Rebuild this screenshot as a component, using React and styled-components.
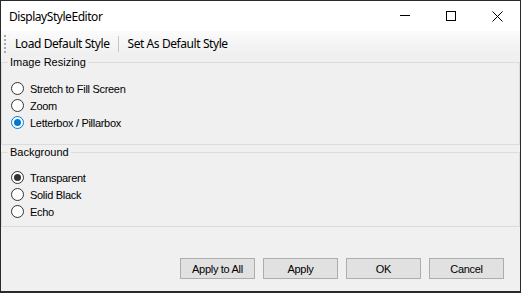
import React, { useState } from "react";
import styled, { createGlobalStyle } from "styled-components";

const GlobalStyle = createGlobalStyle`
  html, body {
    margin: 0;
    padding: 0;
    background: #2a2a2c;
  }
  #root {
    padding: 1px 0 0 1px;
  }
`;

// Fenêtre principale
const Window = styled.div`
  width: 519px;
  height: 290px;
  display: flex;
  flex-direction: column;
  background: #f0f0f0;
  font-family: "Liberation Sans", Arial, sans-serif;
  font-size: 11px;
  color: #000;
`;

const TitleBar = styled.div`
  height: 30px;
  display: flex;
  align-items: center;
  background: #fff;
  flex-shrink: 0;
`;

const Title = styled.span`
  flex: 1;
  padding-left: 8px;
  font-family: "Noto Sans", "Open Sans", sans-serif;
  font-size: 12px;
  letter-spacing: -0.45px;
`;

const CaptionButton = styled.div`
  width: 46px;
  height: 30px;
  display: flex;
  align-items: center;
  justify-content: center;
`;

const ToolStrip = styled.div`
  height: 25px;
  display: flex;
  align-items: center;
  background: linear-gradient(to bottom, #fbfbfb, #efefef);
  font-family: "Noto Sans", "Open Sans", sans-serif;
  font-size: 12px;
  letter-spacing: -0.42px;
  flex-shrink: 0;
`;

const Grip = styled.span`
  width: 2px;
  height: 18px;
  margin-left: 3px;
  background: repeating-linear-gradient(
    to bottom,
    #a8a8a8 0 2px,
    transparent 2px 4px
  );
`;

const ToolItem = styled.span`
  padding: 0 ${({ $right }) => $right || 8}px 0 ${({ $left }) => $left || 8}px;
  line-height: 22px;
`;

const ToolSeparator = styled.span`
  width: 1px;
  height: 16px;
  background: #c5c5c5;
`;

const GroupBox = styled.div`
  margin-top: ${({ $top }) => $top}px;
  height: ${({ $height }) => $height}px;
  border: 1px solid #dcdcdc;
  box-sizing: border-box;
  flex-shrink: 0;
`;

const GroupCaption = styled.span`
  display: block;
  width: fit-content;
  margin: -7px 0 0 6px;
  padding: 0 2px;
  line-height: 13px;
  background: #f0f0f0;
`;

const RadioList = styled.div`
  display: flex;
  flex-direction: column;
  margin-top: ${({ $gap }) => $gap}px;
  padding-left: 9px;
`;

const RadioRow = styled.label`
  height: 17px;
  display: flex;
  align-items: center;
  gap: 6px;
  cursor: default;
`;

const RadioCircle = styled.span`
  width: 13px;
  height: 13px;
  box-sizing: border-box;
  border-radius: 50%;
  border: 1px solid ${({ $checked, $accent }) => ($checked && $accent ? "#0078d7" : "#333")};
  background: #fff;
  display: flex;
  align-items: center;
  justify-content: center;

  &::after {
    content: "";
    width: 7px;
    height: 7px;
    border-radius: 50%;
    background: ${({ $accent }) => ($accent ? "#0078d7" : "#333")};
    display: ${({ $checked }) => ($checked ? "block" : "none")};
  }
`;

const RadioLabel = styled.span`
  letter-spacing: -0.3px;
`;

const Footer = styled.div`
  margin-top: auto;
  display: flex;
  justify-content: flex-end;
  gap: 8px;
  padding: 0 16px 12px 0;
`;

const Button = styled.button`
  width: 75px;
  height: 21px;
  box-sizing: border-box;
  padding: 0;
  border: 1px solid #adadad;
  background: #e1e1e1;
  font-family: "Liberation Sans", Arial, sans-serif;
  font-size: 11px;
  letter-spacing: -0.3px;
  color: #000;
`;

const RadioGroup = ({ options, value, onChange, accent, gap }) => (
  <RadioList $gap={gap}>
    {options.map((opt) => (
      <RadioRow key={opt} onClick={() => onChange(opt)}>
        <RadioCircle $checked={value === opt} $accent={accent} />
        <RadioLabel>{opt}</RadioLabel>
      </RadioRow>
    ))}
  </RadioList>
);

const App = () => {
  const [resize, setResize] = useState("Letterbox / Pillarbox");
  const [bg, setBg] = useState("Transparent");

  return (
    <>
      <GlobalStyle />
      <Window>
        <TitleBar>
          <Title>DisplayStyleEditor</Title>
          <CaptionButton>
            <svg width="10" height="10" viewBox="0 0 10 10">
              <path d="M0 4.5h10" stroke="#000" strokeWidth="1" />
            </svg>
          </CaptionButton>
          <CaptionButton>
            <svg width="10" height="10" viewBox="0 0 10 10">
              <rect x="0.5" y="0.5" width="9" height="9" fill="none" stroke="#000" />
            </svg>
          </CaptionButton>
          <CaptionButton>
            <svg width="11" height="11" viewBox="0 0 11 11">
              <path d="M0.5 0.5l10 10M10.5 0.5l-10 10" stroke="#000" strokeWidth="1" />
            </svg>
          </CaptionButton>
        </TitleBar>

        <ToolStrip>
          <Grip />
          <ToolItem $left={9} $right={9}>Load Default Style</ToolItem>
          <ToolSeparator />
          <ToolItem $left={8}>Set As Default Style</ToolItem>
        </ToolStrip>

        <GroupBox $top={6} $height={83}>
          <GroupCaption>Image Resizing</GroupCaption>
          <RadioGroup
            accent
            gap={11}
            options={["Stretch to Fill Screen", "Zoom", "Letterbox / Pillarbox"]}
            value={resize}
            onChange={setResize}
          />
        </GroupBox>

        <GroupBox $top={7} $height={75}>
          <GroupCaption>Background</GroupCaption>
          <RadioGroup
            gap={10}
            options={["Transparent", "Solid Black", "Echo"]}
            value={bg}
            onChange={setBg}
          />
        </GroupBox>

        <Footer>
          <Button>Apply to All</Button>
          <Button>Apply</Button>
          <Button>OK</Button>
          <Button>Cancel</Button>
        </Footer>
      </Window>
    </>
  );
};

export default App;
